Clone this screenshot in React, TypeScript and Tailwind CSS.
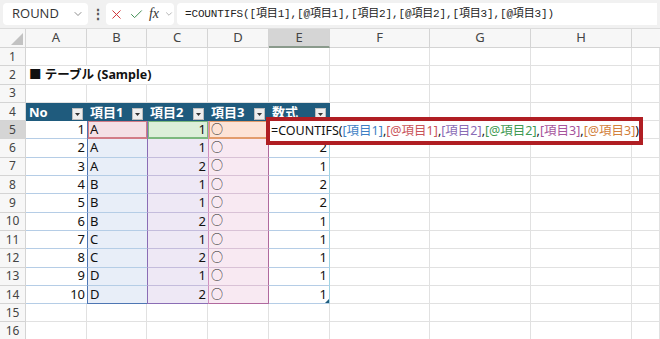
import { Check, ChevronDown, X } from "lucide-react";

const JP = "font-['Noto_Sans','Noto_Sans_CJK_JP',sans-serif]";

const rows = [
  { no: 1, a: "A", b: 1, e: 2 },
  { no: 2, a: "A", b: 1, e: 2 },
  { no: 3, a: "A", b: 2, e: 1 },
  { no: 4, a: "B", b: 1, e: 2 },
  { no: 5, a: "B", b: 1, e: 2 },
  { no: 6, a: "B", b: 2, e: 1 },
  { no: 7, a: "C", b: 1, e: 1 },
  { no: 8, a: "C", b: 2, e: 1 },
  { no: 9, a: "D", b: 1, e: 1 },
  { no: 10, a: "D", b: 2, e: 1 },
];

const grid = "border-r border-b border-[#e1e1e1]";

function RowHead({ n, active }: { n: number; active?: boolean }) {
  return (
    <div
      className={`w-[26px] shrink-0 flex items-center justify-center border-r border-b border-[#d4d4d4] text-[12px] text-[#444] ${
        active ? "bg-[#d5d5d5]" : "bg-[#f7f7f7]"
      }`}
    >
      {n}
    </div>
  );
}

function Rest() {
  return (
    <>
      <div className={`w-[100px] shrink-0 ${grid}`} />
      <div className={`w-[101px] shrink-0 ${grid}`} />
      <div className={`w-[101px] shrink-0 ${grid}`} />
      <div className={`flex-1 ${grid}`} />
    </>
  );
}

function EmptyRow({ n }: { n: number }) {
  return (
    <div className="flex h-[18.3px]">
      <RowHead n={n} />
      <div className={`w-[61px] shrink-0 ${grid}`} />
      <div className={`w-[60px] shrink-0 ${grid}`} />
      <div className={`w-[61px] shrink-0 ${grid}`} />
      <div className={`w-[61px] shrink-0 ${grid}`} />
      <div className={`w-[61px] shrink-0 ${grid}`} />
      <Rest />
    </div>
  );
}

function FilterBtn() {
  return (
    <div className="w-[11px] h-[12px] mb-[1px] mr-[4px] self-end bg-[#eeeeee] border border-[#bdbdbd] flex items-center justify-center">
      <svg width="5" height="3" viewBox="0 0 5 3">
        <path d="M0 0h5L2.5 3z" fill="#333" />
      </svg>
    </div>
  );
}

function HeadCell({ label, w }: { label: string; w: string }) {
  return (
    <div className={`${w} shrink-0 flex justify-between bg-[#1f5b7d] text-white font-bold text-[13px]`}>
      <span className="pl-[3px] self-center leading-none">{label}</span>
      <FilterBtn />
    </div>
  );
}

const ref = (t: string, c: string) => <span className={c}>{t}</span>;

export default function App() {
  return (
    <div className={`relative w-[660px] h-[339px] overflow-hidden bg-white ${JP}`}>
      {/* formula bar */}
      <div className="h-[29px] bg-[#f1f1f1] flex items-center gap-[3px] px-[3px] border-b border-[#dcdcdc]">
        <div className="w-[85px] h-[22px] bg-white rounded-[4px] flex items-center justify-between pl-[9px] pr-[4px] font-['Open_Sans',sans-serif] text-[13px] text-[#333]">
          ROUND
          <ChevronDown size={12} strokeWidth={1.5} className="text-[#666]" />
        </div>
        <div className="w-[12px] text-center text-[14px] text-[#555] leading-none font-bold">⋮</div>
        <div className="w-[68px] h-[22px] bg-white rounded-[4px] flex items-center gap-[5px] pl-[3px]">
          <X size={15} strokeWidth={1.6} className="text-[#d13438]" />
          <Check size={15} strokeWidth={1.6} className="text-[#3e8e52]" />
          <span className="font-['Liberation_Serif',serif] italic text-[14px] text-[#333] leading-none">fx</span>
          <ChevronDown size={10} strokeWidth={1.5} className="text-[#888]" />
        </div>
        <div className="flex-1 h-[22px] bg-white rounded-l-[4px] flex items-center pl-[8px] font-['Liberation_Mono','Noto_Sans_CJK_JP',monospace] text-[11px] tracking-[-0.15px] text-[#222]">
          =COUNTIFS([項目1],[@項目1],[項目2],[@項目2],[項目3],[@項目3])
        </div>
      </div>

      {/* column headers */}
      <div className="flex h-[19px] text-[13px] text-[#444]">
        <div className="w-[26px] shrink-0 bg-[#f7f7f7] border-r border-b border-[#d4d4d4] flex items-end justify-end p-[2px]">
          <svg width="12" height="12" viewBox="0 0 12 12">
            <path d="M12 0v12H0z" fill="#c2c2c2" />
          </svg>
        </div>
        {["A", "B", "C", "D"].map((c, i) => (
          <div
            key={c}
            className={`${i === 1 ? "w-[60px]" : "w-[61px]"} shrink-0 bg-[#f7f7f7] border-r border-b border-[#d4d4d4] flex items-center justify-center`}
          >
            {c}
          </div>
        ))}
        <div className="w-[61px] shrink-0 bg-[#d5d5d5] border-r border-[#d4d4d4] border-b-2 border-b-[#8a9a8c] flex items-center justify-center">
          E
        </div>
        <div className="w-[100px] shrink-0 bg-[#f7f7f7] border-r border-b border-[#d4d4d4] flex items-center justify-center">F</div>
        <div className="w-[101px] shrink-0 bg-[#f7f7f7] border-r border-b border-[#d4d4d4] flex items-center justify-center">G</div>
        <div className="w-[101px] shrink-0 bg-[#f7f7f7] border-r border-b border-[#d4d4d4] flex items-center justify-center">H</div>
        <div className="flex-1 bg-[#f7f7f7] border-b border-[#d4d4d4]" />
      </div>

      <EmptyRow n={1} />
      {/* title row */}
      <div className="flex h-[18.3px]">
        <RowHead n={2} />
        <div className="w-[61px] shrink-0 border-b border-[#e1e1e1] relative">
          <span className="absolute left-[3px] top-0 h-full flex items-center whitespace-nowrap font-bold text-[12.5px] text-[#111]">
            ■ テーブル (Sample)
          </span>
        </div>
        <div className="w-[60px] shrink-0 border-b border-[#e1e1e1]" />
        <div className={`w-[61px] shrink-0 ${grid}`} />
        <div className={`w-[61px] shrink-0 ${grid}`} />
        <div className={`w-[61px] shrink-0 ${grid}`} />
        <Rest />
      </div>
      <EmptyRow n={3} />

      {/* table header */}
      <div className="flex h-[18.3px]">
        <RowHead n={4} />
        <HeadCell label="No" w="w-[61px]" />
        <HeadCell label="項目1" w="w-[60px]" />
        <HeadCell label="項目2" w="w-[61px]" />
        <HeadCell label="項目3" w="w-[61px]" />
        <HeadCell label="数式" w="w-[61px]" />
        <Rest />
      </div>

      {/* table body */}
      {rows.map((r, i) => {
        const first = i === 0;
        const last = i === rows.length - 1;
        return (
          <div key={r.no} className="flex h-[18.3px] text-[13px] text-[#111]">
            <RowHead n={i + 5} active={first} />
            <div className="w-[61px] shrink-0 bg-white border-b border-[#b5cde6] flex items-center justify-end pr-[2px]">
              {r.no}
            </div>
            <div
              className={`w-[60px] shrink-0 border-l border-l-[#4e76b3] border-b flex items-center pl-[2px] ${
                first
                  ? "bg-[#f4e0e5] shadow-[inset_0_0_0_1px_#d27c86] border-b-[#d27c86]"
                  : last
                    ? "bg-[#e8eef8] border-b-[#4e76b3]"
                    : "bg-[#e8eef8] border-b-[#b5cde6]"
              }`}
            >
              {r.a}
            </div>
            <div
              className={`w-[61px] shrink-0 border-l border-l-[#8a6db5] border-b flex items-center justify-end pr-[2px] ${
                first
                  ? "bg-[#dcefd9] shadow-[inset_0_0_0_1px_#7cb87e] border-b-[#7cb87e]"
                  : last
                    ? "bg-[#eee8f5] border-b-[#8a6db5]"
                    : "bg-[#eee8f5] border-b-[#c4bcdc]"
              }`}
            >
              {r.b}
            </div>
            <div
              className={`w-[61px] shrink-0 border-l border-l-[#cf8fbf] border-r border-r-[#b0699e] border-b flex items-center pl-[2px] text-[12px] text-[#222] ${
                first
                  ? "bg-[#fde3d6] shadow-[inset_0_0_0_1px_#e39c6c] border-b-[#e39c6c]"
                  : last
                    ? "bg-[#f8e9f2] border-b-[#b0699e]"
                    : "bg-[#f8e9f2] border-b-[#d9c2d6]"
              }`}
            >
              ○
            </div>
            <div className="relative w-[61px] shrink-0 bg-white border-r border-r-[#9ed3e3] border-b border-b-[#b5cde6] flex items-center justify-end pr-[2px]">
              {first ? "" : r.e}
              {last && (
                <svg className="absolute right-0 bottom-0" width="4" height="4" viewBox="0 0 4 4">
                  <path d="M4 0v4H0z" fill="#1f5b7d" />
                </svg>
              )}
            </div>
            <Rest />
          </div>
        );
      })}

      <EmptyRow n={15} />
      <EmptyRow n={16} />

      {/* in-cell edit with highlight box */}
      <div className="absolute left-[266px] top-[117px] w-[377px] h-[28px] border-[4px] border-[#b01e23] bg-white flex items-center pl-[1px] text-[12.5px] text-[#111] whitespace-nowrap">
        =COUNTIFS(
        {ref("[項目1]", "text-[#3f7fc4]")},
        {ref("[@項目1]", "text-[#c9545a]")},
        {ref("[項目2]", "text-[#8a6bb5]")},
        {ref("[@項目2]", "text-[#3f9a52]")},
        {ref("[項目3]", "text-[#a6549c]")},
        {ref("[@項目3]", "text-[#d2813c]")})
      </div>
    </div>
  );
}
